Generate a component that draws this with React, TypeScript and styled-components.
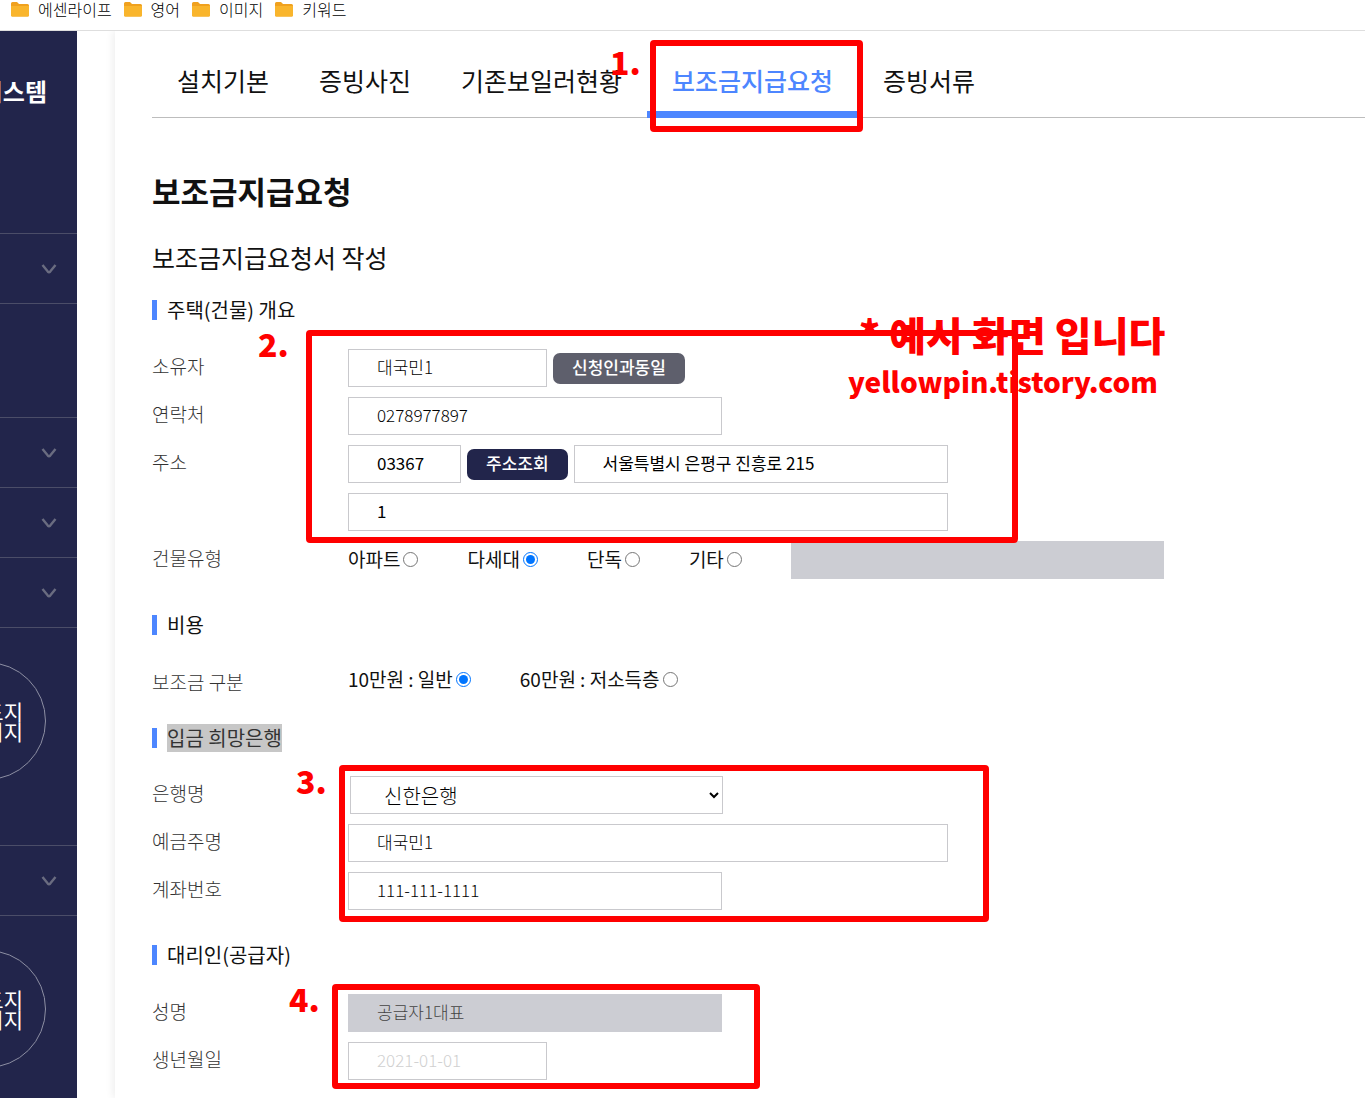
import React from "react";
import styled, { createGlobalStyle, css } from "styled-components";

const RED = "#ff0000";
const BLUE = "#4d86ff";
const NAVY = "#22254b";

const Global = createGlobalStyle`
  *, *::before, *::after { box-sizing: border-box; }
  body {
    margin: 0;
    background: #fff;
    color: #111;
    font-family: "Noto Sans CJK KR", sans-serif;
  }
  h1, h2, h3, p { margin: 0; font-weight: 400; }
  input, select, button { font-family: inherit; margin: 0; }
`;

const Page = styled.div`
  height: 100vh;
  overflow: hidden;
  display: flex;
  flex-direction: column;
`;

const Bookmarks = styled.nav`
  flex: none;
  display: flex;
  gap: 12px;
  height: 31px;
  padding-left: 11px;
  border-bottom: 1px solid #dedede;
`;

const Bookmark = styled.a`
  display: flex;
  gap: 9px;
  height: 18px;
  align-items: center;
  color: #000;
  font-size: 16px;
  font-weight: 300;
  line-height: 18px;
  text-decoration: none;
  svg { display: block; }
`;

const Body = styled.div`
  flex: 1;
  min-height: 0;
  overflow: hidden;
  display: flex;
`;

const Sidebar = styled.aside`
  flex: none;
  width: 77px;
  overflow: hidden;
  background: ${NAVY};
  color: #fff;
`;

const Brand = styled.div`
  display: flex;
  justify-content: flex-end;
  height: 202px;
  padding: 42px 30px 0 0;
  font-size: 24px;
  font-weight: 700;
  line-height: 36px;
  white-space: nowrap;
`;

const MenuItem = styled.button`
  display: flex;
  align-items: center;
  justify-content: flex-end;
  width: 100%;
  height: 70px;
  padding: 0 20px 0 0;
  border: 0;
  border-top: 1px solid #4b4d68;
  background: none;
  color: #6a6c80;
`;

const MenuSpace = styled.div<{ $h: number }>`
  display: flex;
  justify-content: flex-end;
  height: ${(p) => p.$h}px;
  padding: 34px 31px 0 0;
  border-top: 1px solid #4b4d68;
`;

const RoundLink = styled.a`
  flex: none;
  display: flex;
  align-items: center;
  justify-content: flex-end;
  width: 118px;
  height: 118px;
  padding-right: 22px;
  border: 1px solid #8d8fa3;
  border-radius: 50%;
  color: #fff;
  font-size: 21px;
  line-height: 20px;
  text-align: right;
  text-decoration: none;
`;

const Content = styled.main`
  flex: 1;
  min-width: 0;
  margin-left: 38px;
  padding-left: 37px;
  box-shadow: -2px 0 8px rgba(0, 0, 0, 0.07);
`;

const Tabs = styled.nav`
  display: flex;
  height: 87px;
  border-bottom: 1px solid #bdbdbd;
`;

const Tab = styled.a<{ $active?: boolean }>`
  position: relative;
  height: 87px;
  padding: 31px 25px 0;
  border-bottom: 7px solid ${(p) => (p.$active ? BLUE : "transparent")};
  color: ${(p) => (p.$active ? BLUE : "#111")};
  font-size: 25px;
  font-weight: ${(p) => (p.$active ? 500 : 400)};
  line-height: 36px;
  text-decoration: none;
  white-space: nowrap;
`;

const Title = styled.h1`
  margin-top: 50px;
  font-size: 31px;
  font-weight: 700;
  line-height: 46px;
`;

const Subtitle = styled.h2`
  margin-top: 25px;
  font-size: 25px;
  line-height: 36px;
`;

const Section = styled.section<{ $top: number }>`
  margin-top: ${(p) => p.$top}px;
`;

const SectionTitle = styled.h3`
  display: flex;
  align-items: center;
  gap: 10px;
  font-size: 20px;
  line-height: 28px;
  &::before {
    content: "";
    width: 5px;
    height: 20px;
    background: ${BLUE};
  }
`;

const Selected = styled.span`
  background: #c7c7c7;
  color: #333;
`;

const Rows = styled.div<{ $top: number }>`
  position: relative;
  display: flex;
  flex-direction: column;
  gap: 10px;
  margin-top: ${(p) => p.$top}px;
`;

const Row = styled.div`
  display: flex;
  align-items: center;
  height: 38px;
`;

const labelText = css`
  flex: none;
  width: 196px;
  padding-bottom: 4px;
  color: #333;
  font-size: 19px;
  font-weight: 300;
  line-height: 28px;
`;

const Label = styled.label`
  ${labelText}
`;

const RowName = styled.span<{ $low?: boolean }>`
  ${labelText}
  ${(p) => p.$low && "padding: 4px 0 0;"}
`;

const Fields = styled.div`
  display: flex;
  align-items: center;
  gap: 6px;
`;

const Field = styled.input<{ $w: number; $light?: boolean }>`
  width: ${(p) => p.$w}px;
  height: 38px;
  padding: 0 28px 4px;
  border: 1px solid #c9c9cd;
  border-radius: 0;
  background: #fff;
  color: #000;
  font-size: 17px;
  font-weight: ${(p) => (p.$light ? 300 : 400)};
  &::placeholder { color: #d0d0d0; opacity: 1; }
  &:disabled {
    border-color: #cccdd3;
    background: #cccdd3;
    color: #444;
  }
`;

const SmallButton = styled.button<{ $dark?: boolean }>`
  height: 31px;
  padding: 0 19px 2px;
  border: 0;
  border-radius: 7px;
  background: ${(p) => (p.$dark ? NAVY : "#5e5f6c")};
  color: #fff;
  font-size: 17px;
  font-weight: 500;
  line-height: 28px;
  white-space: nowrap;
`;

const Bank = styled.select`
  width: 373px;
  height: 38px;
  margin-left: 2px;
  padding: 0 0 0 29px;
  border: 1px solid #c9c9cd;
  border-radius: 0;
  background: #fff;
  color: #000;
  font-size: 20px;
  font-weight: 300;
`;

const Choices = styled.div`
  display: flex;
  align-items: center;
  gap: 49px;
`;

const Choice = styled.label`
  display: flex;
  align-items: center;
  gap: 3px;
  padding-bottom: 3px;
  font-size: 19px;
  line-height: 28px;
  white-space: nowrap;
  input { width: 15px; height: 15px; margin-top: 2px; }
`;

/* Red marker frame drawn over a group of fields */
const Mark = styled.div<{ $x: number; $y: number; $w: number; $h: number }>`
  position: absolute;
  z-index: 2;
  left: ${(p) => p.$x}px;
  top: ${(p) => p.$y}px;
  width: ${(p) => p.$w}px;
  height: ${(p) => p.$h}px;
  border: 6px solid ${RED};
  border-radius: 4px;
  pointer-events: none;
`;

const Note = styled.span<{ $x: number; $y: number; $size?: number }>`
  position: absolute;
  z-index: 2;
  left: ${(p) => p.$x}px;
  top: ${(p) => p.$y}px;
  color: ${RED};
  font-size: ${(p) => p.$size ?? 32}px;
  font-weight: 900;
  line-height: 40px;
  white-space: nowrap;
  pointer-events: none;
`;

const Folder = () => (
  <svg width="18" height="16" viewBox="0 0 18 16" aria-hidden="true">
    <path d="M0 2.500Q0 1 1.500 1H6l2 2h8.500Q18 3 18 4.500V14q0 1.500-1.500 1.500h-15Q0 15.500 0 14Z" fill="#f0a11e" />
    <path d="M0 5h18v9q0 1.500-1.500 1.500h-15Q0 15.500 0 14Z" fill="#f9b52c" />
  </svg>
);

const Chevron = () => (
  <svg width="16" height="12" viewBox="0 0 16 12" fill="none" stroke="currentColor" strokeWidth="2.400" aria-hidden="true">
    <path d="M1.500 2 6.800 8.600Q8 10 9.200 8.600L14.500 2" />
  </svg>
);

const Menu = () => (
  <MenuItem type="button" aria-label="메뉴 열기">
    <Chevron />
  </MenuItem>
);

const Radio = ({ name, label, on }: { name: string; label: string; on?: boolean }) => (
  <Choice>
    {label}
    <input type="radio" name={name} defaultChecked={on} />
  </Choice>
);

const bookmarks = ["에센라이프", "영어", "이미지", "키워드"];

export default function App() {
  return (
    <Page>
      <Global />
      <Bookmarks>
        {bookmarks.map((b) => (
          <Bookmark href="#" key={b}>
            <Folder />
            {b}
          </Bookmark>
        ))}
      </Bookmarks>
      <Body>
        <Sidebar>
          <Brand>시스템</Brand>
          <Menu />
          <MenuSpace $h={114} />
          <Menu />
          <Menu />
          <Menu />
          <MenuSpace $h={218}>
            <RoundLink href="#">드지<br />이지</RoundLink>
          </MenuSpace>
          <Menu />
          <MenuSpace $h={218}>
            <RoundLink href="#">드지<br />이지</RoundLink>
          </MenuSpace>
        </Sidebar>
        <Content>
          <Tabs>
            <Tab href="#">설치기본</Tab>
            <Tab href="#">증빙사진</Tab>
            <Tab href="#">기존보일러현황</Tab>
            <Tab href="#" $active>
              보조금지급요청
              <Note $x={-37} $y={10}>1.</Note>
              <Mark $x={3} $y={9} $w={213} $h={92} />
            </Tab>
            <Tab href="#">증빙서류</Tab>
          </Tabs>
          <Title>보조금지급요청</Title>
          <Subtitle>보조금지급요청서 작성</Subtitle>
          <Section $top={21}>
            <SectionTitle>주택(건물) 개요</SectionTitle>
            <Rows $top={25}>
              <Mark $x={154} $y={-19} $w={712} $h={213} />
              <Note $x={106} $y={-26}>2.</Note>
              <Note $x={707} $y={-35} $size={40}>* 예시 화면 입니다</Note>
              <Note $x={696} $y={12} $size={28}>yellowpin.tistory.com</Note>
              <Row>
                <Label htmlFor="owner">소유자</Label>
                <Fields>
                  <Field id="owner" $w={199} $light defaultValue="대국민1" />
                  <SmallButton type="button">신청인과동일</SmallButton>
                </Fields>
              </Row>
              <Row>
                <Label htmlFor="phone">연락처</Label>
                <Field id="phone" $w={374} $light defaultValue="0278977897" />
              </Row>
              <Row>
                <Label htmlFor="zip">주소</Label>
                <Fields>
                  <Field id="zip" $w={113} defaultValue="03367" />
                  <SmallButton type="button" $dark>주소조회</SmallButton>
                  <Field $w={374} aria-label="도로명 주소" defaultValue="서울특별시 은평구 진흥로 215" />
                </Fields>
              </Row>
              <Row>
                <RowName />
                <Field $w={600} aria-label="상세 주소" defaultValue="1" />
              </Row>
              <Row>
                <RowName>건물유형</RowName>
                <Choices>
                  <Radio name="type" label="아파트" />
                  <Radio name="type" label="다세대" on />
                  <Radio name="type" label="단독" />
                  <Radio name="type" label="기타" />
                  <Field $w={373} disabled aria-label="기타 건물유형" />
                </Choices>
              </Row>
            </Rows>
          </Section>
          <Section $top={32}>
            <SectionTitle>비용</SectionTitle>
            <Rows $top={22}>
              <Row>
                <RowName $low>보조금 구분</RowName>
                <Choices>
                  <Radio name="grant" label="10만원 : 일반" on />
                  <Radio name="grant" label="60만원 : 저소득층" />
                </Choices>
              </Row>
            </Rows>
          </Section>
          <Section $top={25}>
            <SectionTitle>
              <Selected>입금 희망은행</Selected>
            </SectionTitle>
            <Rows $top={24}>
              <Mark $x={187} $y={-11} $w={650} $h={157} />
              <Note $x={144} $y={-16}>3.</Note>
              <Row>
                <Label htmlFor="bank">은행명</Label>
                <Bank id="bank" defaultValue="신한은행">
                  <option>신한은행</option>
                </Bank>
              </Row>
              <Row>
                <Label htmlFor="holder">예금주명</Label>
                <Field id="holder" $w={600} $light defaultValue="대국민1" />
              </Row>
              <Row>
                <Label htmlFor="account">계좌번호</Label>
                <Field id="account" $w={374} $light defaultValue="111-111-1111" />
              </Row>
            </Rows>
          </Section>
          <Section $top={31}>
            <SectionTitle>대리인(공급자)</SectionTitle>
            <Rows $top={25}>
              <Mark $x={180} $y={-10} $w={428} $h={105} />
              <Note $x={137} $y={-16}>4.</Note>
              <Row>
                <Label htmlFor="agent">성명</Label>
                <Field id="agent" $w={374} $light disabled defaultValue="공급자1대표" />
              </Row>
              <Row>
                <Label htmlFor="birth">생년월일</Label>
                <Field id="birth" $w={199} $light placeholder="2021-01-01" />
              </Row>
            </Rows>
          </Section>
        </Content>
      </Body>
    </Page>
  );
}
